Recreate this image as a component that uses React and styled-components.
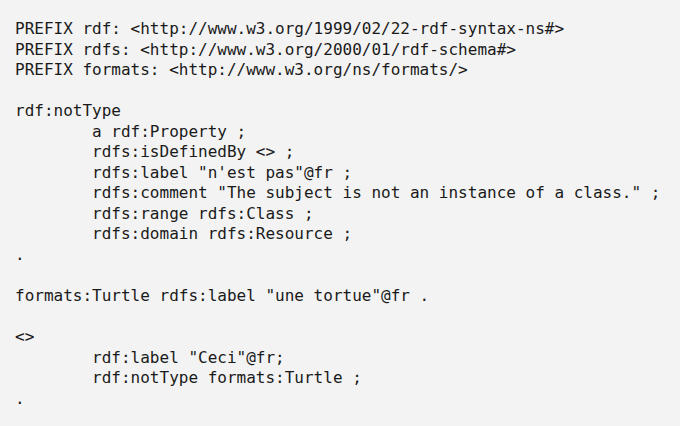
import styled, { createGlobalStyle } from "styled-components";

const GlobalStyle = createGlobalStyle`
  html, body {
    margin: 0;
    padding: 0;
    background: #f3f3f3;
  }
`;

const code = `PREFIX rdf: <http://www.w3.org/1999/02/22-rdf-syntax-ns#>
PREFIX rdfs: <http://www.w3.org/2000/01/rdf-schema#>
PREFIX formats: <http://www.w3.org/ns/formats/>

rdf:notType
\ta rdf:Property ;
\trdfs:isDefinedBy <> ;
\trdfs:label "n'est pas"@fr ;
\trdfs:comment "The subject is not an instance of a class." ;
\trdfs:range rdfs:Class ;
\trdfs:domain rdfs:Resource ;
.

formats:Turtle rdfs:label "une tortue"@fr .

<>
\trdf:label "Ceci"@fr;
\trdf:notType formats:Turtle ;
.`;

const App = () => {
  return (
    <>
      <GlobalStyle />
      <Page>
        <Code>{code}</Code>
      </Page>
    </>
  );
};

const Page = styled.div`
  width: 680px;
  height: 426px;
  background: #f3f3f3;
  overflow: hidden;
`;
const Code = styled.pre`
  margin: 0;
  padding: 19px 0 0 15px;
  font-family: "DejaVu Sans Mono", "Liberation Mono", monospace;
  font-size: 16px;
  line-height: 20.55px;
  tab-size: 8;
  color: #1a1a1a;
`;

export default App;
